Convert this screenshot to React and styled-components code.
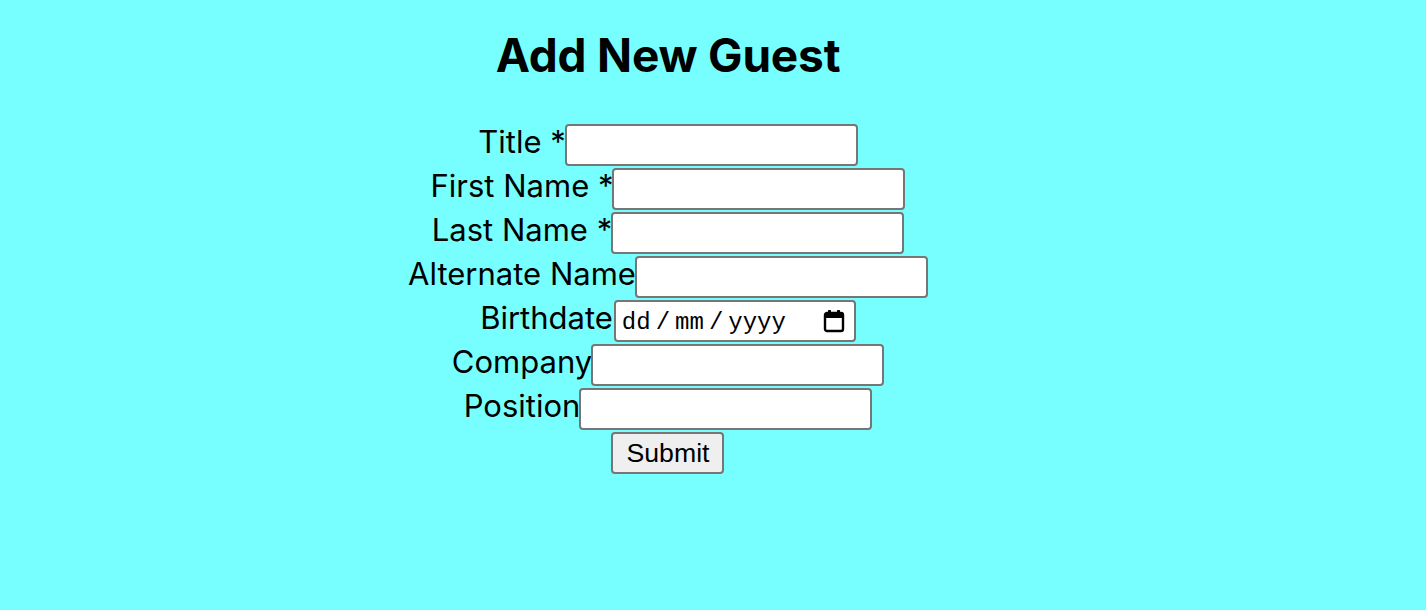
import React from "react";
import styled, { createGlobalStyle } from "styled-components";

const Global = createGlobalStyle`
  html, body { margin: 0; padding: 0; background: #77ffff; }
  body { font-family: Inter, "Noto Sans", sans-serif; color: #000; }
`;

const Page = styled.main`
  width: 1336px;
  min-height: 610px;
  display: flex;
  flex-direction: column;
  align-items: center;
  padding-top: 26px;
  box-sizing: border-box;
`;

const Heading = styled.h1`
  margin: 0 0 39px;
  font-size: 46px;
  font-weight: 700;
  line-height: 58px;
  letter-spacing: -0.2px;
`;

const Form = styled.form`
  display: flex;
  flex-direction: column;
  align-items: center;
`;

const Row = styled.div`
  height: 44px;
  display: flex;
  align-items: center;
`;

const Label = styled.label`
  font-size: 31px;
  line-height: 37px;
  padding-bottom: 7px;
  white-space: pre;
`;

const Input = styled.input`
  box-sizing: border-box;
  width: 293px;
  height: 42px;
  margin: 0 0 0 -1px;
  border: 2px solid #767676;
  border-radius: 4px;
  background: #fff;
  padding: 2px 6px;
  font-family: Inter, sans-serif;
  font-size: 26px;
  color: #000;
`;

const DateBox = styled.div`
  box-sizing: border-box;
  width: 242px;
  height: 42px;
  margin-left: 1px;
  border: 2px solid #767676;
  border-radius: 4px;
  background: #fff;
  display: flex;
  align-items: center;
  padding: 0 9px 0 6px;
  font-family: "Liberation Mono", "DejaVu Sans Mono", monospace;
  font-size: 24px;
  color: #000;
`;

const Segment = styled.span`
  line-height: 1;
  padding-top: 4px;
`;

const Sep = styled.span`
  line-height: 1;
  padding-top: 4px;
  margin: 0 ${(p) => p.$gap}px;
`;

const CalIcon = styled.svg`
  margin-left: auto;
  width: 22px;
  height: 24px;
  flex-shrink: 0;
`;

const Button = styled.button`
  box-sizing: border-box;
  width: 113px;
  height: 42px;
  margin: 0;
  border: 2px solid #767676;
  border-radius: 4px;
  background: #efefef;
  font-family: "Liberation Sans", Arial, sans-serif;
  font-size: 26.67px;
  color: #000;
  padding: 0 12px;
`;

const fields = [
  { label: "Title *" },
  { label: "First Name *" },
  { label: "Last Name *" },
  { label: "Alternate Name" },
  { label: "Birthdate", date: true },
  { label: "Company" },
  { label: "Position" },
];

function DateField() {
  return (
    <DateBox role="textbox" aria-label="Birthdate">
      <Segment>dd</Segment>
      <Sep $gap={5}>/</Sep>
      <Segment>mm</Segment>
      <Sep $gap={5}>/</Sep>
      <Segment>yyyy</Segment>
      <CalIcon viewBox="0 0 22 24" aria-hidden="true">
        <rect x="2" y="4" width="18" height="18" rx="2" fill="none" stroke="#000" strokeWidth="2.4" />
        <rect x="2" y="4" width="18" height="5" fill="#000" />
        <rect x="5" y="1" width="3" height="5" rx="0.5" fill="#000" />
        <rect x="14" y="1" width="3" height="5" rx="0.5" fill="#000" />
      </CalIcon>
    </DateBox>
  );
}

export default function App() {
  return (
    <>
      <Global />
      <Page>
        <Heading>Add New Guest</Heading>
        <Form onSubmit={(e) => e.preventDefault()}>
          {fields.map((f) => (
            <Row key={f.label}>
              <Label>{f.label}</Label>
              {f.date ? <DateField /> : <Input type="text" />}
            </Row>
          ))}
          <Row>
            <Button type="submit">Submit</Button>
          </Row>
        </Form>
      </Page>
    </>
  );
}
